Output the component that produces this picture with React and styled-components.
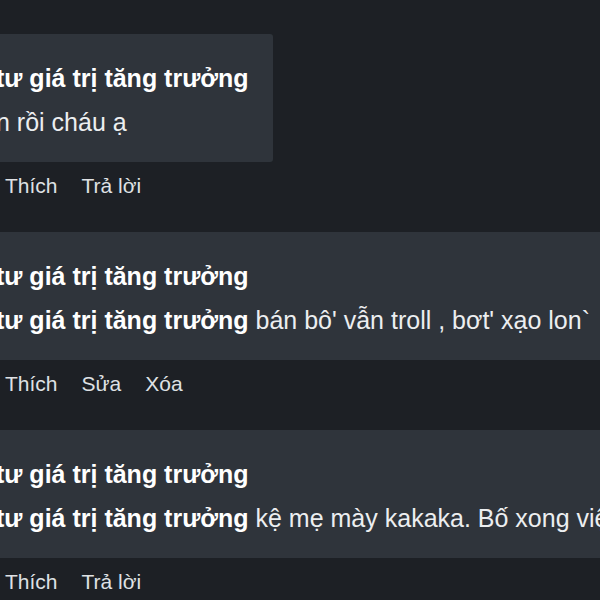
import React from 'react';
import styled, { createGlobalStyle } from 'styled-components';

const GlobalStyle = createGlobalStyle`
  html, body {
    margin: 0;
    padding: 0;
    background: #1d2025;
    overflow: hidden;
  }
`;

const Page = styled.div`
  width: 600px;
  height: 600px;
  overflow: hidden;
  background: #1d2025;
  font-family: 'Liberation Sans', Arial, sans-serif;
  padding-top: 34px;
  box-sizing: border-box;
`;

const Thread = styled.div`
  display: flex;
  flex-direction: column;
  margin-left: -30px;
`;

const Comment = styled.div`
  display: flex;
  flex-direction: column;
  align-items: flex-start;
  margin-bottom: 24px;
`;

const Bubble = styled.div`
  background: #2f343b;
  border-radius: 3px;
  padding: 22px 24px 18px 26px;
  box-sizing: border-box;
  font-size: 25px;
  ${(p) => p.$wide && 'width: 700px;'}
  white-space: nowrap;
`;

const Line = styled.div`
  line-height: 44px;
  color: #eceef0;
`;

const Name = styled.span`
  font-weight: bold;
  color: #fff;
`;

const Actions = styled.div`
  display: flex;
  gap: 24px;
  padding: 2px 0 0 35px;
  font-size: 21px;
  line-height: 44px;
  color: #dfe1e4;
`;

const Action = styled.span`
  cursor: pointer;
`;

const comments = [
  { name: 'tư giá trị tăng trưởng', body: 'n rồi cháu ạ', actions: ['Thích', 'Trả lời'] },
  { name: 'tư giá trị tăng trưởng', tag: 'tư giá trị tăng trưởng', body: " bán bô' vẫn troll , bơt' xạo lon`", actions: ['Thích', 'Sửa', 'Xóa'], wide: true },
  { name: 'tư giá trị tăng trưởng', tag: 'tư giá trị tăng trưởng', body: ' kệ mẹ mày kakaka. Bố xong việc rồi', actions: ['Thích', 'Trả lời'], wide: true },
];

export default function App() {
  return (
    <Page>
      <GlobalStyle />
      <Thread>
        {comments.map((c, i) => (
          <Comment key={i}>
            <Bubble $wide={c.wide}>
              <Line><Name>{c.name}</Name></Line>
              <Line>{c.tag && <Name>{c.tag}</Name>}{c.body}</Line>
            </Bubble>
            <Actions>
              {c.actions.map((a) => <Action key={a}>{a}</Action>)}
            </Actions>
          </Comment>
        ))}
      </Thread>
    </Page>
  );
}
